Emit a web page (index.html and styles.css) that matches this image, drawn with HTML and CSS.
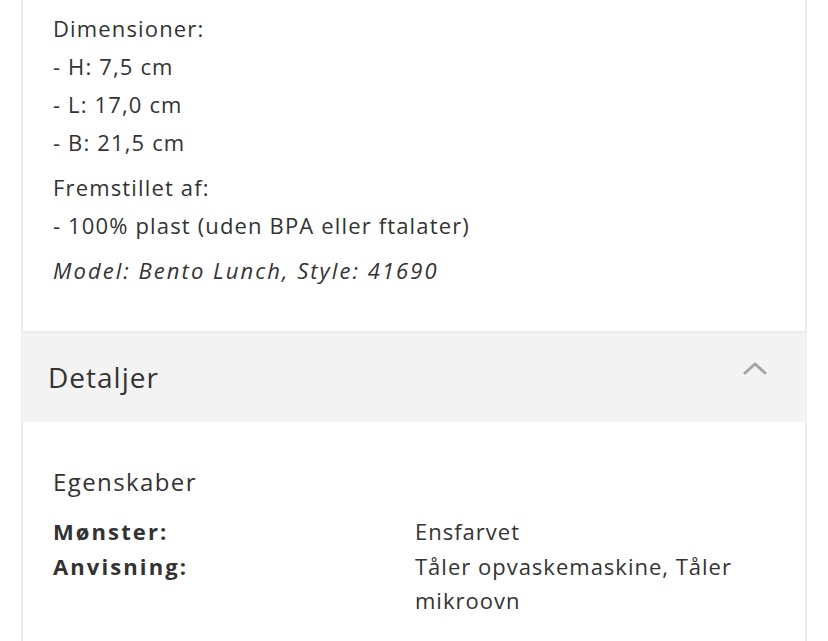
FILE: index.html
```
<!DOCTYPE html>
<html lang="da">
<head>
<meta charset="utf-8">
<title>Produktbeskrivelse</title>
<link rel="stylesheet" href="styles.css">
</head>
<body>
<div class="card">
  <section class="description">
    <p>Dimensioner:<br>- H: 7,5 cm<br>- L: 17,0 cm<br>- B: 21,5 cm</p>
    <p>Fremstillet af:<br>- 100% plast (uden BPA eller ftalater)</p>
    <p class="model">Model: Bento Lunch, Style: 41690</p>
  </section>
  <div class="accordion-header">
    <h2>Detaljer</h2>
    <svg class="chevron" width="24" height="14" viewBox="0 0 24 14" aria-hidden="true">
      <path d="M2 12 L12 3 L22 12" fill="none" stroke="#a3a3a3" stroke-width="3" stroke-linecap="round" stroke-linejoin="round"/>
    </svg>
  </div>
  <section class="details">
    <h3>Egenskaber</h3>
    <dl class="props">
      <dt>Mønster:</dt><dd>Ensfarvet</dd>
      <dt>Anvisning:</dt><dd>Tåler opvaskemaskine, Tåler mikroovn</dd>
    </dl>
  </section>
</div>
</body>
</html>
```
FILE: styles.css
```
html, body {
  margin: 0;
  padding: 0;
  background: #ffffff;
}

body {
  color: #333333;
  font-family: "Open Sans", "Liberation Sans", sans-serif;
  letter-spacing: 1.15px;
}

.card {
  margin-left: 21px;
  width: 782px;
  border-left: 2px solid #ececec;
  border-right: 2px solid #ececec;
  min-height: 641px;
}

.description {
  padding: 9px 0 42px 30px;
  font-size: 22px;
  line-height: 38px;
}

.description p {
  margin: 0 0 7px;
}

.description p:last-child {
  margin-bottom: 0;
}

.model {
  font-style: italic;
  letter-spacing: 2.05px;
}

.accordion-header {
  height: 91px;
  margin: 0 -2px;
  padding: 0 40px 0 27px;
  background: #f3f3f3;
  box-shadow: inset 0 2px 2px rgba(0, 0, 0, 0.03);
  display: flex;
  align-items: center;
  justify-content: space-between;
}

.accordion-header h2 {
  margin: 0;
  font-size: 28px;
  font-weight: 400;
  letter-spacing: 1px;
  color: #333333;
}

.chevron {
  margin-top: -17px;
}

.details {
  padding: 43px 0 20px 30px;
  font-size: 22px;
  line-height: 34px;
}

.details h3 {
  margin: 0 0 15px;
  font-size: 24px;
  font-weight: 400;
  letter-spacing: 1.4px;
}

.props {
  margin: 0;
  display: grid;
  grid-template-columns: 362px 1fr;
  row-gap: 1px;
}

.props dt {
  font-weight: 700;
  letter-spacing: 2.1px;
}

.props dd {
  margin: 0;
  padding-right: 50px;
  letter-spacing: 1px;
}
```
